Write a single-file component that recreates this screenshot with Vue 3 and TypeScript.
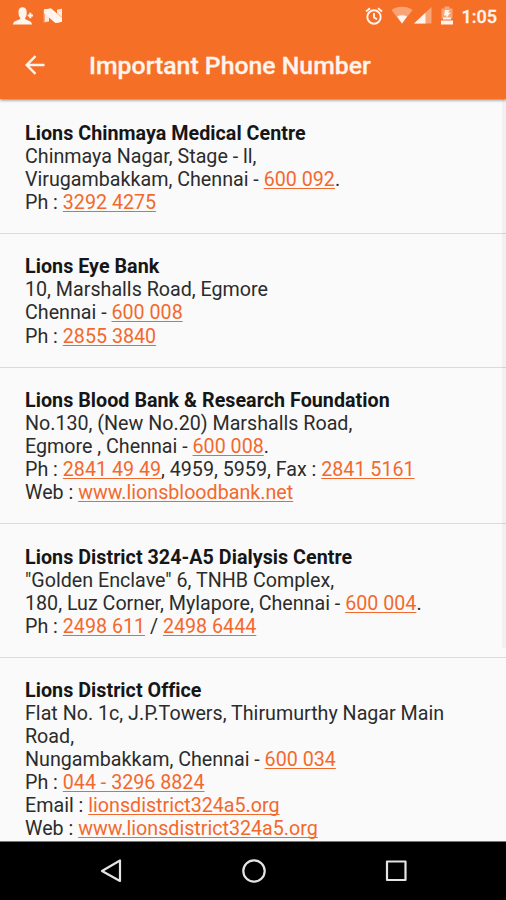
<script setup lang="ts">
interface Segment {
  text: string
  link?: boolean
}

interface Contact {
  name: string
  lines: Segment[][]
}

const t = (text: string): Segment => ({ text })
const a = (text: string): Segment => ({ text, link: true })

const contacts: Contact[] = [
  {
    name: 'Lions Chinmaya Medical Centre',
    lines: [
      [t('Chinmaya Nagar, Stage - ll,')],
      [t('Virugambakkam, Chennai - '), a('600 092'), t('.')],
      [t('Ph : '), a('3292 4275')],
    ],
  },
  {
    name: 'Lions Eye Bank',
    lines: [
      [t('10, Marshalls Road, Egmore')],
      [t('Chennai - '), a('600 008')],
      [t('Ph : '), a('2855 3840')],
    ],
  },
  {
    name: 'Lions Blood Bank & Research Foundation',
    lines: [
      [t('No.130, (New No.20) Marshalls Road,')],
      [t('Egmore , Chennai - '), a('600 008'), t('.')],
      [t('Ph : '), a('2841 49 49'), t(', 4959, 5959, Fax : '), a('2841 5161')],
      [t('Web : '), a('www.lionsbloodbank.net')],
    ],
  },
  {
    name: 'Lions District 324-A5 Dialysis Centre',
    lines: [
      [t('"Golden Enclave" 6, TNHB Complex,')],
      [t('180, Luz Corner, Mylapore, Chennai - '), a('600 004'), t('.')],
      [t('Ph : '), a('2498 611'), t(' / '), a('2498 6444')],
    ],
  },
  {
    name: 'Lions District Office',
    lines: [
      [t('Flat No. 1c, J.P.Towers, Thirumurthy Nagar Main Road,')],
      [t('Nungambakkam, Chennai - '), a('600 034')],
      [t('Ph : '), a('044 - 3296 8824')],
      [t('Email : '), a('lionsdistrict324a5.org')],
      [t('Web : '), a('www.lionsdistrict324a5.org')],
    ],
  },
]
</script>

<template>
  <div class="screen">
    <header class="top">
      <div class="status">
        <div class="status-left">
          <svg class="i-person" viewBox="0 0 20 18" width="20" height="18">
            <path d="M0 17.500C.3 14 3 14 7.200 12.200V10.800C5.800 9.500 5.500 7.500 5.500 5C5.500 2 7 .3 9.500.3S13.700 2 13.700 5c0 2.500-.2 4.500-1.500 5.800v1.400C16 14 18.700 14 19 17.500z" />
            <path d="M16.300 5.800h2v1.700H20v2h-1.700v1.700h-2V9.500h-1.600v-2h1.600z" />
          </svg>
          <svg class="i-n" viewBox="0 0 20 16" width="20" height="16">
            <path class="dim" d="M.5 2 6 1v13l-5.500.5zM14 2l5-1.500v13L14 15z" />
            <path d="M1 1.500 8 .5 19 10v3.700L12.500 15 1 5zM14 1.700 19 .7V9l-5-4zM2 6l4 3.500V13l-4 1z" opacity=".85" />
            <path d="M1 1.500 8 .5 19 10v3.700L12.500 15 1 5z" />
          </svg>
        </div>
        <div class="status-right">
          <svg viewBox="0 0 18 18" width="18" height="18" class="i-alarm">
            <circle cx="9" cy="10" r="6.700" />
            <path d="M9 6v4.500l3 1.800M1 4.500l4-3.200M17 4.500l-4-3.200" />
          </svg>
          <svg viewBox="0 0 22 18" width="22" height="18" class="i-wifi">
            <path class="dim" d="M.5 4C6.500-.2 15.500-.2 21.500 4L11 17.500z" />
            <path d="M6 10.500c3-1.800 7-1.800 10 0l-5 7z" />
          </svg>
          <svg viewBox="0 0 18 17" width="18" height="17" class="i-signal">
            <path class="dim" d="M17.500 0v16.500H0z" />
            <path d="M11.500 5.700v10.800H0z" />
          </svg>
          <svg viewBox="0 0 14 19" width="14" height="19" class="i-battery">
            <path class="dim" d="M1.500 2.500h3V.5h5v2h3v10h-11z" />
            <path d="M5 4h4.500L8 6.500h2.500L6.500 12V9.500H4z" />
            <path d="M3 11.500h8v2H3zM1 14.500h12v4H1z" />
          </svg>
          <span class="clock">1:05</span>
        </div>
      </div>
      <div class="bar">
        <svg class="back" viewBox="0 0 20 20" width="20" height="20">
          <path d="M19.500 10H2M10.500 1.200 1.700 10l8.800 8.800" />
        </svg>
        <h1>Important Phone Number</h1>
      </div>
    </header>

    <main class="list">
      <section v-for="c in contacts" :key="c.name" class="item">
        <h2>{{ c.name }}</h2>
        <p v-for="(line, i) in c.lines" :key="i"><template v-for="(s, j) in line" :key="j"><a v-if="s.link">{{ s.text }}</a><template v-else>{{ s.text }}</template></template></p>
      </section>
      <i class="scrollbar"></i>
    </main>

    <nav class="nav">
      <svg viewBox="0 0 24 26" width="24" height="26"><path d="M21 2.500v20.500L3 13z" /></svg>
      <svg viewBox="0 0 26 26" width="26" height="26"><circle cx="13" cy="13" r="10.700" /></svg>
      <svg viewBox="0 0 24 26" width="24" height="26"><path d="M3 3.500h18.500v18.500H3z" /></svg>
    </nav>
  </div>
</template>

<style>
body {
  margin: 0;
}
</style>

<style scoped>
.screen {
  width: 506px;
  height: 900px;
  display: flex;
  flex-direction: column;
  overflow: hidden;
  background: #fafafa;
  font-family: Roboto, sans-serif;
  color: #2c2c2c;
}
.top {
  flex: none;
  height: 98.500px;
  background: #f66f27;
  color: #fff4ee;
  position: relative;
  z-index: 1;
  box-shadow: 0 1px 3px rgba(0, 0, 0, 0.5);
}
.status {
  height: 33px;
  display: flex;
  justify-content: space-between;
  align-items: flex-start;
  padding: 0 9px 0 13px;
}
svg {
  display: block;
  flex: none;
  fill: #fff4ee;
}
.dim {
  opacity: 0.4;
}
.status-left,
.status-right {
  display: flex;
  align-items: flex-start;
}
.i-person {
  margin-top: 7px;
}
.i-n {
  margin: 8px 0 0 10px;
}
.i-alarm {
  margin-top: 7px;
  fill: none;
  stroke: #fff4ee;
  stroke-width: 1.900;
}
.i-wifi {
  margin: 6px 0 0 8px;
}
.i-signal {
  margin: 7px 0 0 1px;
}
.i-battery {
  margin: 6px 0 0 8px;
}
.clock {
  margin: 5px 0 0 8px;
  font-size: 18px;
  line-height: 23px;
  font-weight: 500;
  -webkit-text-stroke: 0.3px #fff4ee;
}
.bar {
  height: 65px;
  display: flex;
  align-items: center;
  padding-left: 25px;
}
.back {
  margin-top: -2px;
  fill: none;
  stroke: #fff4ee;
  stroke-width: 2.400;
}
h1 {
  margin: 0 0 0 44px;
  font-size: 24.800px;
  line-height: 30px;
  font-weight: 500;
  -webkit-text-stroke: 0.3px #fff4ee;
}
.list {
  position: relative;
  flex: 1;
  min-height: 0;
  overflow: hidden;
  padding-top: 2px;
}
.item {
  padding: 21.300px 25px 19px;
  border-bottom: 1px solid #dadada;
  font-size: 19.680px;
  line-height: 23.060px;
}
h2 {
  margin: 0;
  font-size: inherit;
  line-height: inherit;
  font-weight: 700;
  letter-spacing: 0.040px;
  color: #161616;
}
p {
  margin: 0;
}
a {
  color: #f3692d;
  text-decoration: underline;
  text-decoration-thickness: 1.400px;
  text-underline-offset: 2px;
  text-decoration-skip-ink: none;
}
.scrollbar {
  position: absolute;
  top: 0;
  right: 0;
  width: 4px;
  height: 549px;
  background: rgba(0, 0, 0, 0.035);
}
.nav {
  box-sizing: border-box;
  flex: none;
  height: 59px;
  border-top: 1px solid #777;
  background: #000;
  display: flex;
  justify-content: space-between;
  align-items: center;
  padding: 0 98px 0 99px;
}
.nav svg {
  fill: none;
  stroke: #e4e4e4;
  stroke-width: 2.200;
  stroke-linejoin: round;
}
</style>
